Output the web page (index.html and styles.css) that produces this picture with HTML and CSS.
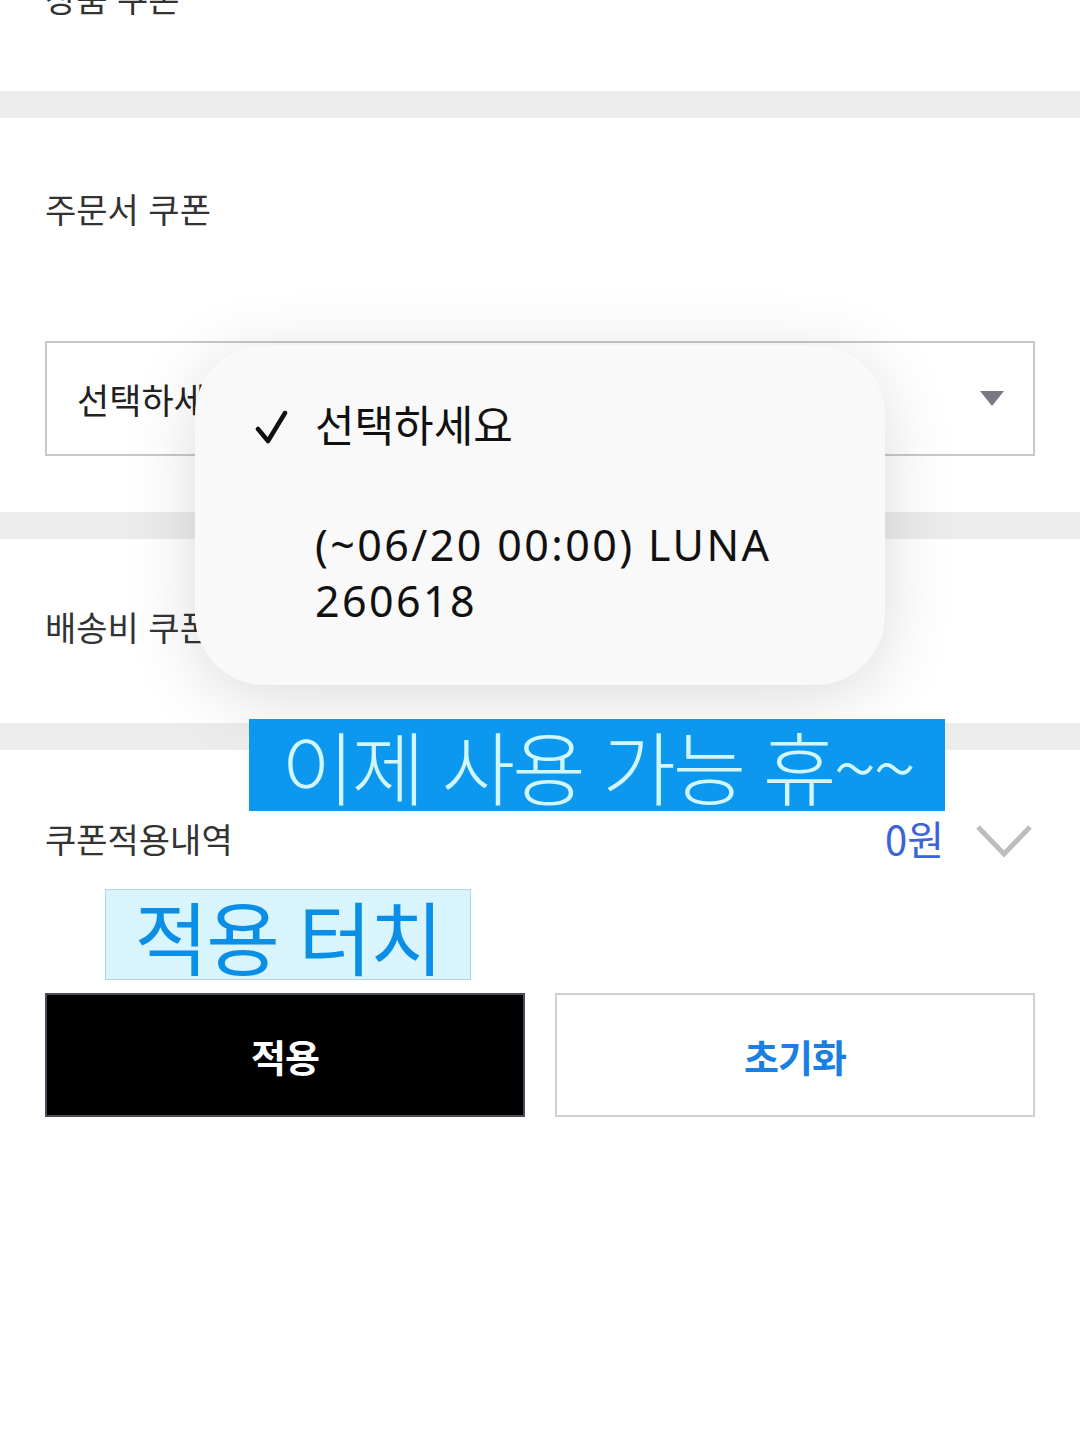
FILE: index.html
```html
<!DOCTYPE html>
<html lang="ko">
<head>
  <meta charset="UTF-8">
  <title>쿠폰 적용</title>
  <link rel="stylesheet" href="styles.css">
</head>
<body>

<div class="page">
  <section class="block block-top">
    <h2 class="label">상품 쿠폰</h2>
  </section>
  <div class="gap"></div>

  <section class="block block-order">
    <h2 class="label">주문서 쿠폰</h2>
    <div class="select">
      <span>선택하세요</span>
      <svg class="caret" width="24" height="15" viewBox="0 0 24 15"><polygon points="0,0 24,0 12,15" fill="#7a7886"/></svg>
    </div>
  </section>
  <div class="gap"></div>

  <section class="block block-ship">
    <h2 class="label">배송비 쿠폰</h2>
  </section>
  <div class="gap"></div>

  <section class="block block-summary">
    <div class="summary-row">
      <h2 class="label">쿠폰적용내역</h2>
      <div class="amount">
        <span class="price">0원</span>
        <svg class="chevron" width="56" height="34" viewBox="0 0 56 34"><polyline points="2,3 28,30 54,3" fill="none" stroke="#bdbdbd" stroke-width="5"/></svg>
      </div>
    </div>
    <div class="buttons">
      <button class="btn btn-apply">적용</button>
      <button class="btn btn-reset">초기화</button>
    </div>
  </section>

  <!-- 열린 드롭다운 -->
  <div class="popup">
    <div class="option">
      <svg class="check" width="60" height="40" viewBox="0 0 60 40"><polyline points="3,22 13,34 30,6" fill="none" stroke="#111" stroke-width="4.5" stroke-linecap="round" stroke-linejoin="round"/></svg>
      <span>선택하세요</span>
    </div>
    <div class="option option-2">
      <span class="no-check"></span>
      <span class="coupon-name">(~06/20 00:00) LUNA<br>260618</span>
    </div>
  </div>

  <div class="banner">이제 사용 가능 휴~~</div>
  <div class="sticker">적용 터치</div>
</div>

</body>
</html>
```

FILE: styles.css
```css
body {
  margin: 0;
  background-color: #ffffff;
  font-family: "Noto Sans CJK KR", "Noto Sans", sans-serif;
  color: #333;
}
.page {
  position: relative;
  width: 1080px;
  height: 1440px;
  overflow: hidden;
}
.block {
  padding: 0 45px;
  box-sizing: border-box;
}
.gap {
  height: 27px;
  background-color: #ececec;
}
.label {
  margin: 0;
  font-size: 34px;
  line-height: 34px;
  font-weight: 400;
  color: #333;
}
.block-top {
  height: 91px;
  overflow: hidden;
}
.block-top .label {
  margin-top: -19px;
}
.block-order {
  height: 394px;
  padding-top: 74px;
}
.select {
  margin-top: 115px;
  height: 115px;
  border: 2px solid #c8c8c8;
  box-sizing: border-box;
  display: flex;
  align-items: center;
  justify-content: space-between;
  padding: 0 29px 0 30px;
  font-size: 35px;
  color: #222;
}
.block-ship {
  height: 184px;
  padding-top: 71px;
}
.block-summary {
  padding-top: 72px;
}
.summary-row {
  display: flex;
  justify-content: space-between;
  align-items: flex-start;
}
.amount {
  display: flex;
  align-items: center;
  gap: 32px;
  margin-top: -4px;
}
.price {
  font-size: 40px;
  line-height: 38px;
  color: #3b64d8;
}
.chevron {
  margin-right: 3px;
  margin-top: 6px;
}
.buttons {
  display: flex;
  gap: 30px;
  margin-top: 135px;
}
.btn {
  flex: 1;
  height: 124px;
  font-family: inherit;
  font-size: 38px;
  font-weight: 700;
  letter-spacing: -1px;
  box-sizing: border-box;
}
.btn-apply {
  background-color: #000;
  color: #fff;
  border: 2px solid #4b4b5c;
}
.btn-reset {
  background-color: #fff;
  color: #1a7fe0;
  border: 2px solid #d0d0d0;
}
.popup {
  position: absolute;
  left: 195px;
  top: 345px;
  width: 690px;
  height: 340px;
  box-sizing: border-box;
  padding: 53px 60px 0 60px;
  background-color: #f9f9f9;
  border-radius: 70px;
  box-shadow: 0 12px 70px rgba(0, 0, 0, 0.14);
  color: #111;
  font-family: "Noto Sans", "Noto Sans CJK KR", sans-serif;
  font-size: 43px;
  line-height: 56px;
}
.option {
  display: flex;
  align-items: flex-start;
}
.check {
  width: 60px;
  flex: none;
  margin-top: 9px;
}
.no-check {
  width: 60px;
  flex: none;
}
.option-2 {
  margin-top: 63px;
}
.coupon-name {
  letter-spacing: 2.4px;
}
.banner {
  position: absolute;
  left: 249px;
  top: 719px;
  width: 696px;
  height: 92px;
  background-color: #0b98ee;
  color: #d2f6ff;
  font-size: 80px;
  line-height: 90px;
  font-weight: 300;
  text-align: center;
  letter-spacing: -3px;
  white-space: nowrap;
}
.sticker {
  position: absolute;
  left: 105px;
  top: 889px;
  width: 366px;
  height: 91px;
  box-sizing: border-box;
  background-color: #d8f4fd;
  border: 1px solid #b4d2dc;
  color: #0b8fe6;
  font-size: 80px;
  line-height: 89px;
  font-weight: 400;
  text-align: center;
  letter-spacing: -2px;
  white-space: nowrap;
}
```
